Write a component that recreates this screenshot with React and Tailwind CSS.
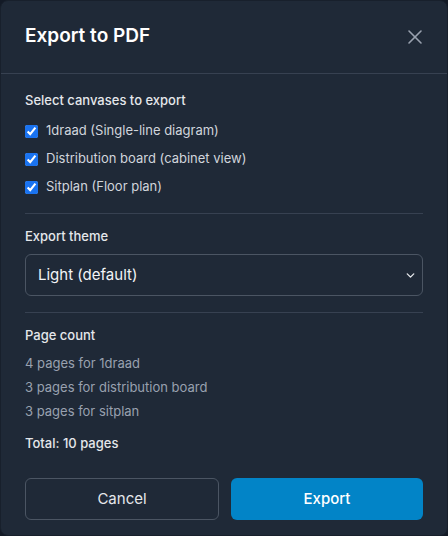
import React, { useState } from 'react';
import { X, ChevronDown } from 'lucide-react';

const canvases = [
  { id: '1draad', label: '1draad (Single-line diagram)', pages: 4, name: '1draad' },
  { id: 'board', label: 'Distribution board (cabinet view)', pages: 3, name: 'distribution board' },
  { id: 'sitplan', label: 'Sitplan (Floor plan)', pages: 3, name: 'sitplan' },
];

const App = () => {
  const [selected, setSelected] = useState(canvases.map((c) => c.id));
  const [theme, setTheme] = useState('light');

  const toggle = (id) => {
    setSelected(selected.includes(id) ? selected.filter((s) => s !== id) : [...selected, id]);
  };

  const total = canvases
    .filter((c) => selected.includes(c.id))
    .reduce((sum, c) => sum + c.pages, 0);

  return (
    <div className="w-[448px] h-[536px] bg-[#131a26]" style={{ fontFamily: 'Inter, "Noto Sans", sans-serif' }}>
      <div className="w-full h-full bg-[#1f2937] rounded-lg border border-[#18202c] flex flex-col">
        <div className="h-[73px] px-6 flex items-center justify-between border-b border-[#374151] shrink-0">
          <h2 className="text-[19px] font-semibold text-white -mt-px">Export to PDF</h2>
          <button className="text-gray-400 -mr-2 p-1">
            <X size={24} strokeWidth={1.6} />
          </button>
        </div>

        <div className="px-6 pt-4 flex-1 flex flex-col">
          <p className="text-[13px] leading-5 font-medium text-gray-200 mb-[11px]">Select canvases to export</p>
          <div className="flex flex-col gap-2">
            {canvases.map((c) => (
              <label key={c.id} className="flex items-center gap-2 h-5 text-[13px] text-gray-300">
                <input
                  type="checkbox"
                  checked={selected.includes(c.id)}
                  onChange={() => toggle(c.id)}
                  className="w-[13px] h-[13px] m-0 accent-[#1a73f0]"
                />
                {c.label}
              </label>
            ))}
          </div>

          <div className="border-t border-[#374151] mt-4 pt-3">
            <p className="text-[13px] leading-5 font-medium text-gray-200 mb-2">Export theme</p>
            <div className="relative">
              <select
                value={theme}
                onChange={(e) => setTheme(e.target.value)}
                className="w-full h-[42px] appearance-none bg-[#1f2937] border border-[#4b5563] rounded-md pl-3 pr-8 text-[15px] text-gray-100 focus:outline-none"
              >
                <option value="light">Light (default)</option>
                <option value="dark">Dark</option>
              </select>
              <ChevronDown size={13} strokeWidth={2.5} className="absolute right-[6px] top-[15px] text-gray-200 pointer-events-none" />
            </div>
          </div>

          <div className="border-t border-[#374151] mt-4 pt-3">
            <p className="text-[13px] leading-5 font-medium text-gray-200 mb-2">Page count</p>
            <div className="flex flex-col gap-1">
              {canvases
                .filter((c) => selected.includes(c.id))
                .map((c) => (
                  <p key={c.id} className="text-[13px] leading-5 text-gray-400">
                    {c.pages} pages for {c.name}
                  </p>
                ))}
            </div>
            <p className="text-[13px] leading-5 font-medium text-gray-200 mt-3">Total: {total} pages</p>
          </div>

          <div className="flex gap-3 mt-[25px]">
            <button className="flex-1 h-[42px] rounded-md border border-[#4b5563] text-[15px] text-gray-200">
              Cancel
            </button>
            <button className="flex-1 h-[42px] rounded-md bg-[#0284c7] text-[15px] font-medium text-white">
              Export
            </button>
          </div>
        </div>
      </div>
    </div>
  );
};

export default App;
